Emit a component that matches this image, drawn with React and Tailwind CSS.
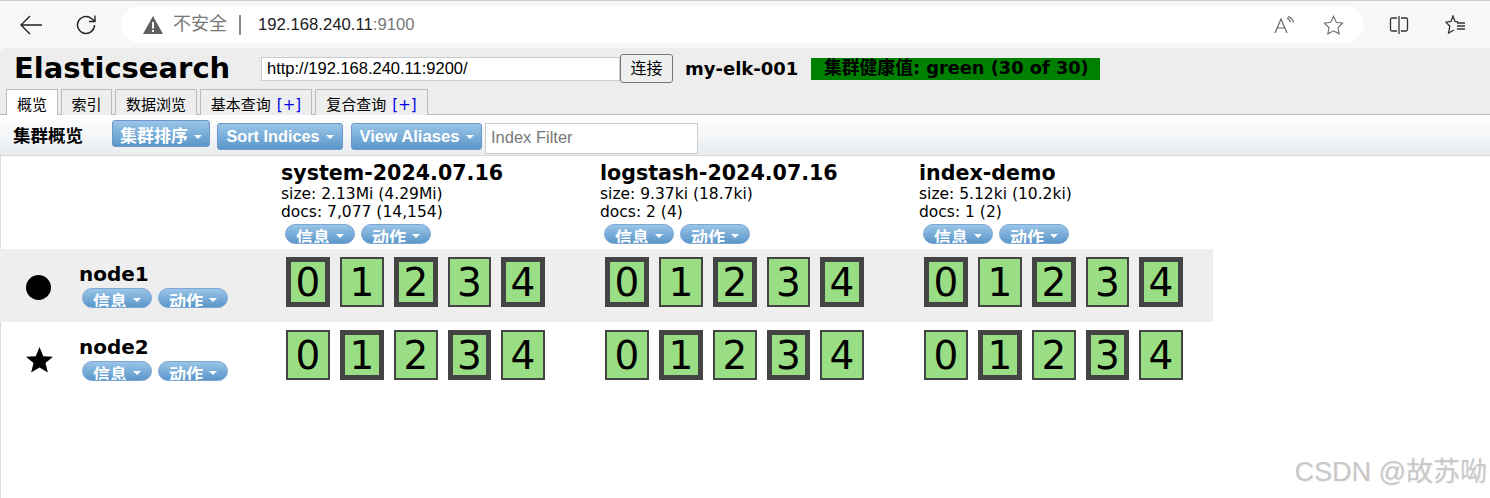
import React from "react";

const sans = "font-['Liberation_Sans','Noto_Sans_CJK_SC',sans-serif]";
const verdana = "font-['DejaVu_Sans','Noto_Sans_CJK_SC',sans-serif]";

const indices = [
  {
    name: "system-2024.07.16",
    size: "size: 2.13Mi (4.29Mi)",
    docs: "docs: 7,077 (14,154)",
    rows: [
      [1, 0, 1, 0, 1],
      [0, 1, 0, 1, 0],
    ],
  },
  {
    name: "logstash-2024.07.16",
    size: "size: 9.37ki (18.7ki)",
    docs: "docs: 2 (4)",
    rows: [
      [1, 0, 1, 0, 1],
      [0, 1, 0, 1, 0],
    ],
  },
  {
    name: "index-demo",
    size: "size: 5.12ki (10.2ki)",
    docs: "docs: 1 (2)",
    rows: [
      [1, 0, 1, 0, 1],
      [0, 1, 0, 1, 0],
    ],
  },
];

function Caret() {
  return (
    <span className="ml-[6px] inline-block h-0 w-0 self-center border-x-[4px] border-t-[4px] border-x-transparent border-t-white" />
  );
}

function Button({ label, width, text }) {
  return (
    <div
      className={`flex h-[27px] items-center justify-center rounded-[3px] border border-[#6f97c9] bg-gradient-to-b from-[#9ac5e8] to-[#5a97c9] font-bold text-white ${sans} ${width} ${text}`}
    >
      {label}
      <Caret />
    </div>
  );
}

function Pill({ label }) {
  return (
    <div
      className={`flex h-[20px] w-[70px] items-start justify-center overflow-hidden rounded-full border border-[#7da6d4] bg-gradient-to-b from-[#9ac5e8] to-[#5a97c9] pt-[4px] text-[17px] font-bold leading-[20px] text-white ${sans}`}
    >
      {label}
      <Caret />
    </div>
  );
}

function PillPair() {
  return (
    <div className="flex gap-[6px]">
      <Pill label="信息" />
      <Pill label="动作" />
    </div>
  );
}

function Shard({ n, primary }) {
  return (
    <div
      className={`flex h-[50px] items-center justify-center border-[#444444] bg-[#99dd84] text-[39px] leading-none text-black ${verdana} ${
        primary ? "border-[5px]" : "border-2"
      } ${n === 3 ? "w-[43px]" : "w-[44px]"}`}
    >
      {n}
    </div>
  );
}

function ShardCell({ flags, width }) {
  return (
    <div className={`flex items-start gap-[10px] pl-[5px] ${width}`}>
      {flags.map((p, i) => (
        <Shard key={i} n={i} primary={p === 1} />
      ))}
    </div>
  );
}

function NodeRow({ name, icon, row, shaded }) {
  return (
    <div className={`flex h-[73px] w-[1213px] pt-[8px] ${shaded ? "bg-[#eeeeee]" : ""}`}>
      <div className="flex w-[281px]">
        <div className="flex w-[79px] justify-center pr-[2px] pt-[17px]">{icon}</div>
        <div className="pt-[5px]">
          <div className={`text-[20px] font-bold leading-[24px] text-black ${verdana}`}>{name}</div>
          <div className="mt-[2px] pl-[3px]">
            <PillPair />
          </div>
        </div>
      </div>
      <ShardCell flags={indices[0].rows[row]} width="w-[319px]" />
      <ShardCell flags={indices[1].rows[row]} width="w-[319px]" />
      <ShardCell flags={indices[2].rows[row]} width="w-[294px]" />
    </div>
  );
}

function BrowserBar() {
  return (
    <div className="flex h-[48px] items-center border-t border-[#d0d0d0] bg-[#f7f7f7] pl-[19px]">
      <svg width="24" height="24" viewBox="0 0 24 24" fill="none" stroke="#222" strokeWidth="1.4">
        <path d="M23 12H2M11 3l-9 9 9 9" />
      </svg>
      <svg className="ml-[31px]" width="24" height="24" viewBox="0 0 24 24" fill="none" stroke="#222" strokeWidth="1.4">
        <path d="M20.500 12a8.500 8.500 0 1 1-3-6.500L21 8.500M21 2.500v6h-6" />
      </svg>
      <div className="ml-[23px] flex h-[37px] w-[1243px] items-center rounded-full bg-white pl-[22px] pr-[20px]">
        <svg width="20" height="18" viewBox="0 0 20 18">
          <path d="M10 0 L20 18 H0 Z" fill="#5f5f5f" />
          <rect x="9" y="6" width="2" height="6.500" fill="#fff" />
          <rect x="9" y="14" width="2" height="2" fill="#fff" />
        </svg>
        <span className={`ml-[10px] text-[18px] text-[#777777] ${sans}`}>不安全</span>
        <span className="ml-[12px] h-[20px] w-[2px] bg-[#8a8a8a]" />
        <span className={`ml-[17px] text-[16.700px] text-[#222222] ${sans}`}>
          192.168.240.11<span className="text-[#777777]">:9100</span>
        </span>
        <div className="ml-auto flex items-center gap-[28px]">
          <svg width="21" height="18" viewBox="0 0 21 18" fill="none" stroke="#666" strokeWidth="1.2">
            <path d="M1 17 7 3l6 14M3 12h8M13 2c2 1 3 2 3.500 4M14 .5c3 1 5 3 5.500 6" />
          </svg>
          <svg width="21" height="20" viewBox="0 0 24 23" fill="none" stroke="#707070" strokeWidth="1.3">
            <path d="M12 1.500l3.200 6.800 7.300 1-5.300 5.100 1.300 7.300L12 18.200l-6.500 3.500 1.300-7.300L1.500 9.300l7.300-1z" />
          </svg>
        </div>
      </div>
      <svg className="ml-[25px]" width="20" height="20" viewBox="0 0 20 20" fill="none" stroke="#333" strokeWidth="1.3">
        <path d="M8 3H3a1.500 1.500 0 0 0-1.500 1.500v10A1.500 1.500 0 0 0 3 16h5M12 3h5a1.500 1.500 0 0 1 1.500 1.500v10A1.500 1.500 0 0 1 17 16h-5M10 1v18" />
      </svg>
      <svg className="ml-[36px]" width="21" height="20" viewBox="0 0 21 20" fill="none" stroke="#333" strokeWidth="1.300">
        <path d="M13 7l-3-.500L8 1 6 6.500.8 7.200l4 3.800-1.200 7 5.400-3M12 8h8M12 11h8M12 14h8" />
      </svg>
    </div>
  );
}

function Tab({ label, plus, width, active }) {
  return (
    <div
      className={`flex h-[26px] items-center justify-center border border-b-0 border-[#bbbbbb] pt-[6px] text-[15px] leading-none text-black ${verdana} ${width} ${
        active ? "bg-white" : "bg-[#eeeeee]"
      }`}
    >
      {label}
      {plus && <span className="ml-[6px] text-[#0000ee]">[+]</span>}
    </div>
  );
}

export default function App() {
  return (
    <div className="relative h-[498px] w-[1490px] overflow-hidden bg-[#f7f7f7]">
      <BrowserBar />
      <div className="h-[450px] overflow-hidden rounded-tl-[8px] bg-white shadow-[inset_1px_0_0_#dddddd]">
        {/* Header */}
        <div className="h-[67px] border-b border-[#bbbbbb] bg-[#ededed]">
          <div className="flex h-[41px] items-center">
            <div className={`ml-[14px] w-[247px] text-[29px] font-bold leading-none text-black ${verdana}`}>
              Elasticsearch
            </div>
            <div className={`flex h-[24px] w-[359px] items-center border border-[#cccccc] bg-white pl-[5px] text-[16.500px] text-black ${sans}`}>
              http://192.168.240.11:9200/
            </div>
            <div className={`flex h-[29px] w-[53px] items-center justify-center rounded-[3px] border border-[#767676] bg-[#efefef] text-[16px] text-black ${sans}`}>
              连接
            </div>
            <div className={`ml-[12px] w-[126px] text-[18px] font-bold text-black ${verdana}`}>my-elk-001</div>
            <div className={`flex h-[22px] w-[289px] items-center bg-[#008000] pb-[1px] pl-[13px] text-[17.800px] font-bold text-black ${verdana}`}>
              集群健康值: green (30 of 30)
            </div>
          </div>
          <div className="flex gap-[3px] pl-[6px]">
            <Tab label="概览" width="w-[52px]" active />
            <Tab label="索引" width="w-[51px]" />
            <Tab label="数据浏览" width="w-[82px]" />
            <Tab label="基本查询" plus width="w-[112px]" />
            <Tab label="复合查询" plus width="w-[113px]" />
          </div>
        </div>

        {/* Toolbar */}
        <div className="flex h-[41px] items-start border-b border-[#d5d9dc] bg-gradient-to-b from-white to-[#e9edf0] pl-[13px]">
          <div className={`mt-[10px] w-[99px] text-[17.500px] font-bold leading-[22px] text-black ${sans}`}>集群概览</div>
          <div className="mt-[5px]">
            <Button label="集群排序" width="w-[98px] pt-[6px]" text="text-[17px] leading-none" />
          </div>
          <div className="ml-[7px] mt-[8px]">
            <Button label="Sort Indices" width="w-[126px]" text="text-[16.300px]" />
          </div>
          <div className="ml-[8px] mt-[8px]">
            <Button label="View Aliases" width="w-[131px]" text="text-[16.700px]" />
          </div>
          <div className={`ml-[3px] mt-[8px] flex h-[31px] w-[213px] items-center border border-[#cccccc] bg-white pb-[3px] pl-[5px] text-[16.500px] text-[#777777] ${sans}`}>
            Index Filter
          </div>
        </div>

        {/* Index headers */}
        <div className="flex h-[93px] pl-[281px]">
          {indices.map((idx) => (
            <div key={idx.name} className={`w-[319px] pt-[5px] text-black ${verdana}`}>
              <div className="text-[20.600px] font-bold leading-[24px]">{idx.name}</div>
              <div className="text-[15.500px] leading-[18px]">{idx.size}</div>
              <div className="text-[15.500px] leading-[18px]">{idx.docs}</div>
              <div className="mt-[3px] pl-[4px]">
                <PillPair />
              </div>
            </div>
          ))}
        </div>

        {/* Nodes */}
        <NodeRow
          name="node1"
          row={0}
          shaded
          icon={<div className="mt-[1px] h-[25px] w-[25px] rounded-full bg-black" />}
        />
        <NodeRow
          name="node2"
          row={1}
          icon={
            <svg className="ml-[2px]" width="27" height="26" viewBox="0 0 28 27">
              <path d="M14 0l3.900 9.500 10.100.700-7.800 6.500 2.500 9.800L14 21.200 5.300 26.500l2.500-9.800L0 10.200l10.100-.7z" fill="#000" />
            </svg>
          }
        />
      </div>

      {/* CSDN watermark */}
      <div className={`absolute bottom-[12px] right-[3px] text-[27px] leading-none text-[#c8c8c8] [text-shadow:1px_1px_1px_#eeeeee] ${sans}`}>
        CSDN @故苏呦
      </div>
    </div>
  );
}
